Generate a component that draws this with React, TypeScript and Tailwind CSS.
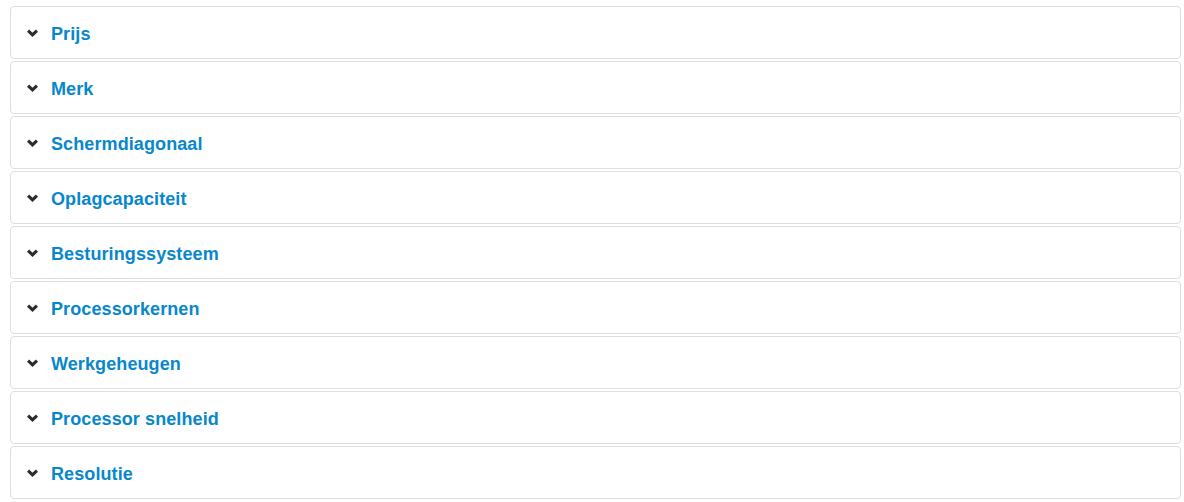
import React from "react";

const items = [
  "Prijs",
  "Merk",
  "Schermdiagonaal",
  "Oplagcapaciteit",
  "Besturingssysteem",
  "Processorkernen",
  "Werkgeheugen",
  "Processor snelheid",
  "Resolutie",
];

function Chevron() {
  return (
    <svg width="11" height="8" viewBox="0 0 11 8" className="shrink-0 mt-[1px]">
      <path d="M1 1.6 L5.5 5.8 L10 1.6" fill="none" stroke="#2b2b2b" strokeWidth="3.2" strokeLinecap="butt" strokeLinejoin="miter" />
    </svg>
  );
}

export default function App() {
  return (
    <div className="bg-white w-[1184px] h-[502px] pt-[6px] pl-[10px]" style={{ fontFamily: '"Liberation Sans", Arial, sans-serif' }}>
      <div className="flex flex-col gap-[2px] w-[1171px]">
        {items.map((t) => (
          <div key={t} className="h-[53px] border border-[#dedede] rounded-[4px] flex items-center pl-[16px]">
            <Chevron />
            <span className="ml-[13px] text-[18px] font-bold text-[#0787cc] leading-none mt-[2px] tracking-[0.1px]">{t}</span>
          </div>
        ))}
      </div>
    </div>
  );
}
